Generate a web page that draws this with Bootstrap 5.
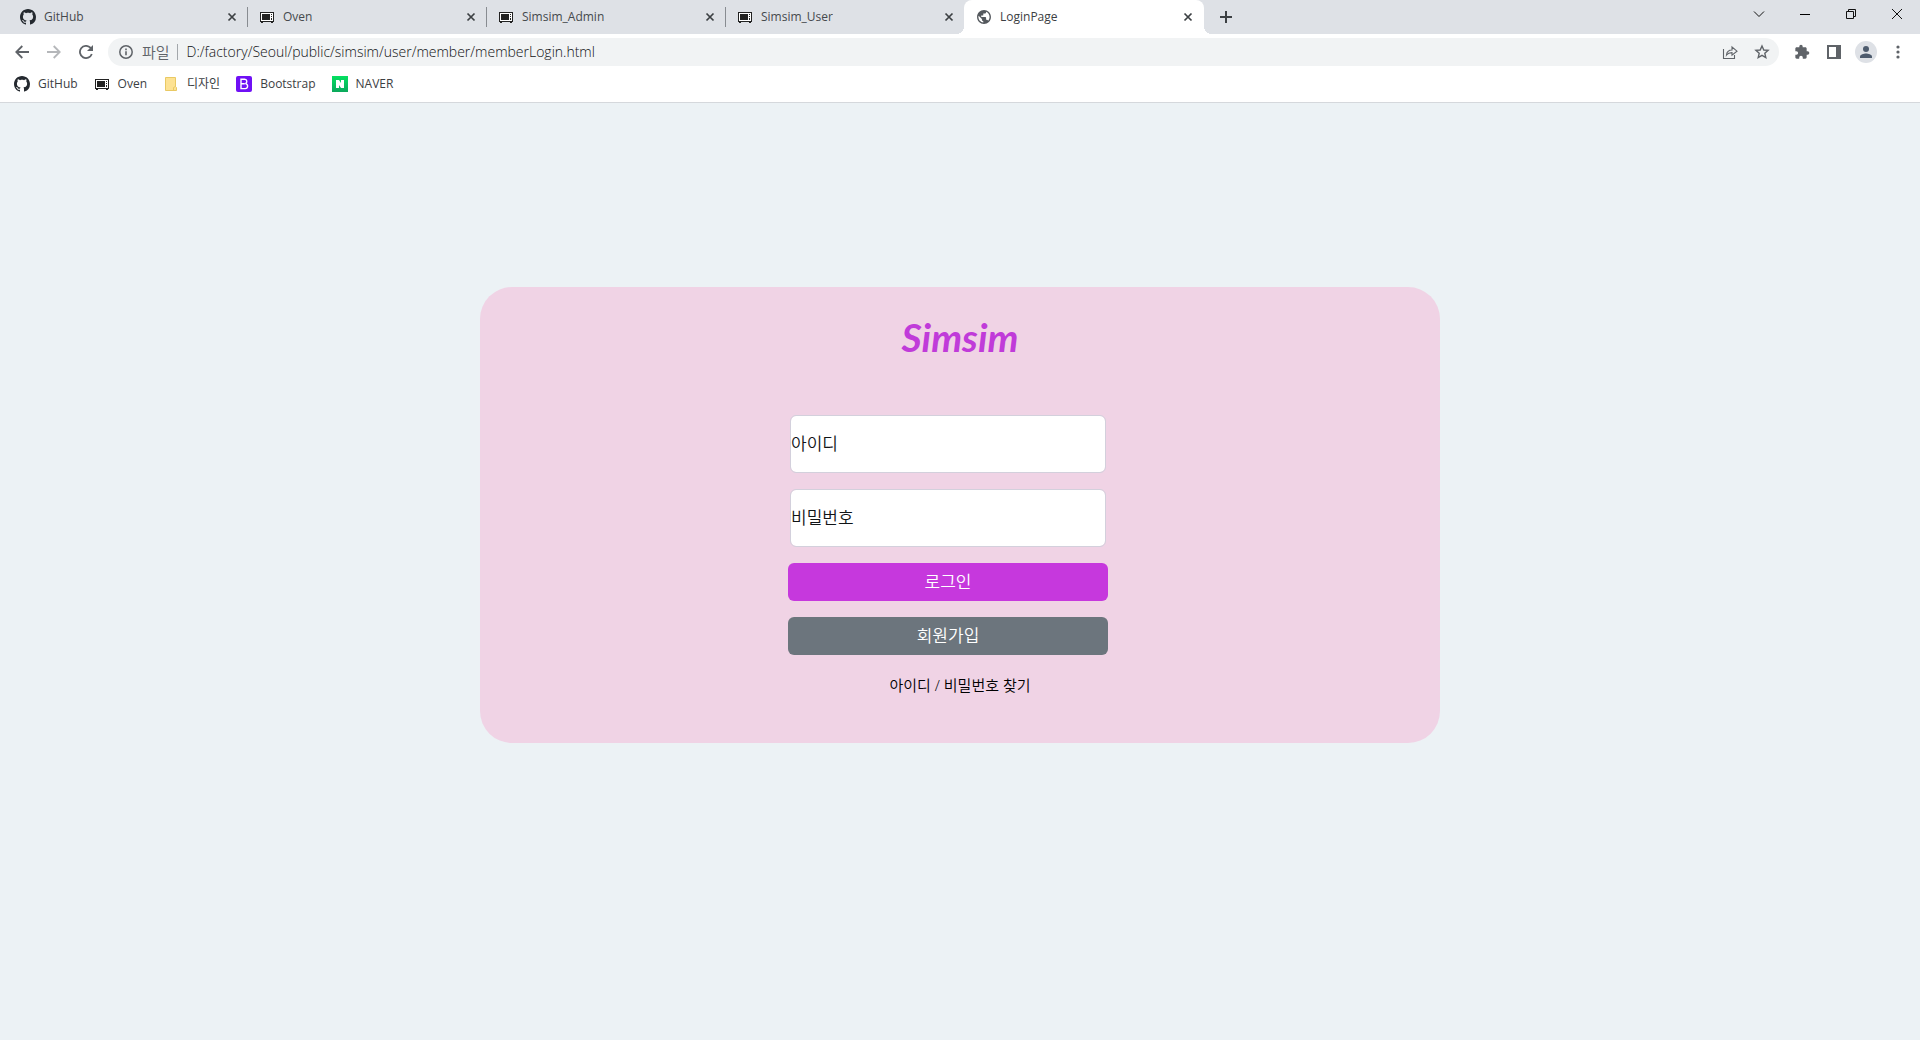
<!DOCTYPE html>
<html lang="ko">
<head>
<meta charset="utf-8">
<meta name="viewport" content="width=device-width, initial-scale=1">
<title>LoginPage</title>
<link href="https://cdn.jsdelivr.net/npm/bootstrap@5.3.0/dist/css/bootstrap.min.css" rel="stylesheet">
<style>
  body { font-family: "Open Sans", "Noto Sans CJK KR", sans-serif; background: #ecf2f5; color: #212529; }
  button { font-family: inherit; }
  svg { display: block; flex: none; }
  .ico { width: 16px; height: 16px; }

  /* tab strip */
  .tab-strip { background: #dee1e6; height: 34px; padding-left: 8px; }
  .tab-item { flex: 0 1 239px; min-width: 0; height: 20px; margin-top: 7px; padding: 0 7px 0 12px; position: relative; font-size: 12px; color: #45494d; }
  .tab-item > a { min-width: 0; color: inherit; }
  .tab-item.ruled { border-left: 1px solid #888c91; padding-left: 11px; }
  .tab-item.current { flex-basis: 240px; background: #fff; height: 34px; margin-top: 0; border-radius: 8px 8px 0 0; padding-right: 8px; color: #3c4043; }
  .tab-item.current::before, .tab-item.current::after { content: ""; position: absolute; bottom: 0; width: 8px; height: 8px; }
  .tab-item.current::before { right: 100%; background: radial-gradient(circle at 0 0, transparent 8px, #fff 8px); }
  .tab-item.current::after { left: 100%; background: radial-gradient(circle at 100% 0, transparent 8px, #fff 8px); }
  .plain { border: 0; background: none; padding: 0; display: flex; align-items: center; justify-content: center; color: #5f6368; }
  .tab-strip .plain { color: #3c4043; }
  .tab-close { width: 16px; height: 16px; }
  .tab-add { width: 28px; height: 34px; margin-left: 8px; }
  .win-btn { width: 46px; height: 28px; }
  .tab-strip .win-btn { color: #111; }

  /* toolbar */
  .tool-row { height: 36px; padding: 0 6px; background: #fff; }
  .tool-btn { width: 32px; height: 28px; }
  .address { background: #f1f3f4; height: 28px; border-radius: 14px; margin: 0 7px 0 6px; padding: 0 1px 0 10px; color: #5f6368; font-size: 14px; }
  .address label { font-size: 15px; font-weight: 350; line-height: 20px; }
  .address input { border: 0; background: none; outline: 0; min-width: 0; height: 20px; padding: 0 0 1px; color: #101113; font-size: 14px; font-weight: 300; }
  .address .rule { width: 1px; height: 16px; background: #a3a7ab; margin: 0 9px 0 7px; }
  .avatar { width: 22px; height: 22px; }

  /* bookmarks */
  .marks { height: 33px; padding: 0 14px 5px; gap: 16px; background: #fff; border-bottom: 1px solid #d5d8dc; font-size: 12px; }
  .marks a { color: #3c4043; gap: 8px; }

  /* login */
  .stage { padding: 184px 0 48px; }
  .login-box { width: 50%; min-width: 360px; background: #f0d3e5; border-radius: 32px; padding: 20px 0 46px; font-weight: 350; }
  .brand { font-family: Lato, sans-serif; font-style: italic; font-weight: 700; font-size: 39px; line-height: 60px; color: #c03bd9; margin-bottom: 48px; }
  .login-form { width: 320px; margin-right: 24px; gap: 16px; font-size: 17px; }
  .login-form .form-floating { margin: 0 2px; }
  .login-form .form-control { height: 58px; min-height: 0; padding: 0 1px; border-color: #d3d0dc; font-size: 17px; }
  .login-form .form-floating > label { padding: 0; height: 100%; display: flex; align-items: center; color: #111416; }
  .login-form .form-control:focus ~ label, .login-form .form-control:not(:placeholder-shown) ~ label { opacity: 0; }
  .login-form .form-control:placeholder-shown:not(:focus) ~ label { opacity: 1; }
  .login-form .btn { height: 38px; font-size: 17px; font-weight: 350; line-height: 24px; border: 0; }
  .btn-orchid, .btn-orchid:hover { background: #c638dd; color: #fff; }
  .find { font-size: 15px; line-height: 24px; color: #000; margin-top: 18px; }
</style>
<script src="https://cdn.jsdelivr.net/npm/bootstrap@5.3.0/dist/js/bootstrap.bundle.min.js"></script>
</head>
<body>

<svg width="0" height="0" class="position-absolute" aria-hidden="true">
  <symbol id="i-github" viewBox="0 0 16 16"><path fill="#24292f" d="M8 0C3.58 0 0 3.58 0 8c0 3.54 2.29 6.53 5.47 7.59.4.07.55-.17.55-.38 0-.19-.01-.82-.01-1.49-2.01.37-2.53-.49-2.69-.94-.09-.23-.48-.94-.82-1.13-.28-.15-.68-.52-.01-.53.63-.01 1.08.58 1.23.82.72 1.21 1.87.87 2.33.66.07-.52.28-.87.51-1.07-1.78-.2-3.64-.89-3.64-3.95 0-.87.31-1.59.82-2.15-.08-.2-.36-1.02.08-2.12 0 0 .67-.21 2.2.82.64-.18 1.32-.27 2-.27s1.36.09 2 .27c1.53-1.04 2.2-.82 2.2-.82.44 1.1.16 1.92.08 2.12.51.56.82 1.27.82 2.15 0 3.07-1.87 3.75-3.65 3.95.29.25.54.73.54 1.48 0 1.07-.01 1.93-.01 2.2 0 .21.15.46.55.38A8.01 8.01 0 0 0 16 8c0-4.42-3.58-8-8-8z"/></symbol>
  <symbol id="i-oven" viewBox="0 0 16 16"><path fill="#222" d="M1 3h14v10h-1v1h-2v-1H4v1H2v-1H1z"/><path fill="#fff" d="M2 4h12v8H2z"/><path fill="#222" d="M3 5h8v6H3zM12 5h1v1h-1zM12 7h1v1h-1zM12 9h1v2h-1z"/></symbol>
  <symbol id="i-x" viewBox="0 0 16 16"><path d="M4.500 4.500l7 7m0-7l-7 7" stroke="currentColor" stroke-width="1.700" fill="none"/></symbol>
</svg>

<header>
  <nav class="tab-strip d-flex" aria-label="Tabs">
    <div class="tab-item d-flex align-items-center">
      <a href="#" class="d-flex align-items-center gap-2 flex-grow-1 text-decoration-none"><svg class="ico"><use href="#i-github"/></svg><span class="text-truncate">GitHub</span></a>
      <button class="plain tab-close" aria-label="Close"><svg class="ico"><use href="#i-x"/></svg></button>
    </div>
    <div class="tab-item ruled d-flex align-items-center">
      <a href="#" class="d-flex align-items-center gap-2 flex-grow-1 text-decoration-none"><svg class="ico"><use href="#i-oven"/></svg><span class="text-truncate">Oven</span></a>
      <button class="plain tab-close" aria-label="Close"><svg class="ico"><use href="#i-x"/></svg></button>
    </div>
    <div class="tab-item ruled d-flex align-items-center">
      <a href="#" class="d-flex align-items-center gap-2 flex-grow-1 text-decoration-none"><svg class="ico"><use href="#i-oven"/></svg><span class="text-truncate">Simsim_Admin</span></a>
      <button class="plain tab-close" aria-label="Close"><svg class="ico"><use href="#i-x"/></svg></button>
    </div>
    <div class="tab-item ruled d-flex align-items-center">
      <a href="#" class="d-flex align-items-center gap-2 flex-grow-1 text-decoration-none"><svg class="ico"><use href="#i-oven"/></svg><span class="text-truncate">Simsim_User</span></a>
      <button class="plain tab-close" aria-label="Close"><svg class="ico"><use href="#i-x"/></svg></button>
    </div>
    <div class="tab-item current d-flex align-items-center">
      <a href="#" class="d-flex align-items-center gap-2 flex-grow-1 text-decoration-none" aria-current="page">
        <svg class="ico" viewBox="0.500 0.500 23 23"><path fill="#54585d" d="M12 2C6.480 2 2 6.480 2 12s4.480 10 10 10 10-4.480 10-10S17.520 2 12 2zm-1 17.930c-3.950-.49-7-3.850-7-7.930 0-.62.08-1.210.21-1.790L9 15v1c0 1.100.9 2 2 2v1.930zm6.900-2.540c-.26-.81-1-1.390-1.900-1.390h-1v-3c0-.55-.45-1-1-1H8v-2h2c.55 0 1-.45 1-1V7h2c1.100 0 2-.9 2-2v-.41c2.930 1.190 5 4.060 5 7.410 0 2.080-.8 3.970-2.100 5.390z"/></svg>
        <span class="text-truncate">LoginPage</span></a>
      <button class="plain tab-close" aria-label="Close"><svg class="ico"><use href="#i-x"/></svg></button>
    </div>
    <button class="plain tab-add" aria-label="New tab"><svg width="14" height="14" viewBox="0 0 14 14"><path d="M7 1v12M1 7h12" stroke="currentColor" stroke-width="2"/></svg></button>
    <div class="d-flex ms-auto">
      <button class="plain win-btn" aria-label="Search tabs"><svg width="12" height="12" viewBox="0 0 12 12"><path d="M1 3.500l5 5 5-5" stroke="currentColor" fill="none"/></svg></button>
      <button class="plain win-btn" aria-label="Minimize"><svg width="10" height="10" viewBox="0 0 10 10"><path d="M0 5h10v1H0z"/></svg></button>
      <button class="plain win-btn" aria-label="Restore"><svg width="10" height="10" viewBox="0 0 10 10"><path d="M.5 2.500h7v7h-7zM2.500 2.500v-2h7v7h-2" stroke="currentColor" fill="none"/></svg></button>
      <button class="plain win-btn" aria-label="Close window"><svg width="10" height="10" viewBox="0 0 10 10"><path d="M0 0l10 10M10 0L0 10" stroke="currentColor" fill="none"/></svg></button>
    </div>
  </nav>

  <div class="tool-row d-flex align-items-center">
    <button class="plain tool-btn" aria-label="Back"><svg width="14" height="14" viewBox="0 0 14 14"><path d="M14 7H1.500M7.300 1L1.300 7l6 6" stroke="currentColor" stroke-width="1.800" fill="none"/></svg></button>
    <button class="plain tool-btn" aria-label="Forward" disabled><svg width="14" height="14" viewBox="0 0 14 14"><path d="M0 7h12.500M6.700 1l6 6-6 6" stroke="#b5b7ba" stroke-width="1.800" fill="none"/></svg></button>
    <button class="plain tool-btn" aria-label="Reload"><svg width="14" height="14" viewBox="0 0 14 14"><path d="M12.800 9A6.100 6.100 0 1 1 11.400 2.700L12.500 4" stroke="currentColor" stroke-width="1.800" fill="none"/><path fill="currentColor" d="M14 0v6H8z"/></svg></button>
    <div class="address d-flex align-items-center flex-grow-1">
      <svg class="ico" viewBox="0 0 16 16"><circle cx="8" cy="8" r="6.200" stroke="currentColor" stroke-width="1.500" fill="none"/><path fill="currentColor" d="M7.200 7.200h1.600v4H7.200zM7.200 4.600h1.600v1.600H7.200z"/></svg>
      <label for="url" class="ms-2">파일</label>
      <span class="rule"></span>
      <input id="url" type="text" class="flex-grow-1" value="D:/factory/Seoul/public/simsim/user/member/memberLogin.html">
      <button class="plain tool-btn" aria-label="Share"><svg class="ico" viewBox="0 0 16 16"><path d="M1.500 5v9.500h11V11M4.500 11c.3-3.300 2.200-5 5.500-5V3l5 4.200-5 4V8.600c-2.600 0-4.300.8-5.500 2.400z" stroke="currentColor" stroke-width="1.100" fill="none"/></svg></button>
      <button class="plain tool-btn" aria-label="Bookmark"><svg class="ico" viewBox="0 0 16 16"><path d="M8 2l1.800 4 4.300.4-3.300 2.900 1 4.200L8 11.300l-3.800 2.200 1-4.200L1.900 6.400 6.200 6z" stroke="currentColor" stroke-width="1.400" fill="none"/></svg></button>
    </div>
    <button class="plain tool-btn" aria-label="Extensions"><svg class="ico" viewBox="0 0 24 24"><path fill="currentColor" d="M20.500 11H19V7c0-1.100-.9-2-2-2h-4V3.500a2.500 2.500 0 0 0-5 0V5H4c-1.100 0-2 .9-2 2v3.800h1.500a2.700 2.700 0 0 1 0 5.400H2V20c0 1.100.9 2 2 2h3.800v-1.500a2.700 2.700 0 0 1 5.400 0V22H17c1.100 0 2-.9 2-2v-4h1.500a2.500 2.500 0 0 0 0-5z"/></svg></button>
    <button class="plain tool-btn" aria-label="Side panel"><svg width="14" height="14" viewBox="0 0 14 14"><path fill="currentColor" fill-rule="evenodd" d="M0 0h14v14H0zM2 2v10h7V2z"/></svg></button>
    <button class="plain tool-btn" aria-label="Profile"><svg class="avatar" viewBox="0 0 22 22"><circle cx="11" cy="11" r="11" fill="#dee1e6"/><circle cx="11" cy="8" r="3" fill="#4d5b6d"/><path fill="#4d5b6d" d="M5 17v-1.500c0-2 4-3 6-3s6 1 6 3V17z"/></svg></button>
    <button class="plain tool-btn" aria-label="Menu"><svg width="4" height="14" viewBox="0 0 4 14"><g fill="currentColor"><circle cx="2" cy="2" r="1.600"/><circle cx="2" cy="7" r="1.600"/><circle cx="2" cy="12" r="1.600"/></g></svg></button>
  </div>

  <nav class="marks d-flex align-items-center" aria-label="Bookmarks">
    <a href="#" class="d-flex align-items-center text-decoration-none"><svg class="ico"><use href="#i-github"/></svg>GitHub</a>
    <a href="#" class="d-flex align-items-center text-decoration-none"><svg class="ico"><use href="#i-oven"/></svg>Oven</a>
    <a href="#" class="d-flex align-items-center text-decoration-none"><svg class="ico" viewBox="0 0 16 16"><path d="M2.500 1.500h10v9l1 1v3h-11z" fill="#fde293" stroke="#e9c964"/><path d="M10.500 14v-2.500l2-1" fill="none" stroke="#e9c964"/></svg>디자인</a>
    <a href="#" class="d-flex align-items-center text-decoration-none"><svg class="ico" viewBox="0 0 16 16"><rect width="16" height="16" rx="2" fill="#6f10f5"/><path d="M5 3.300h3.700a2.200 2.200 0 0 1 .6 4.300 2.500 2.500 0 0 1-.4 5H5zM5 7.800h3.800" fill="none" stroke="#fff" stroke-width="1.400"/></svg>Bootstrap</a>
    <a href="#" class="d-flex align-items-center text-decoration-none"><svg class="ico" viewBox="0 0 16 16"><linearGradient id="nv" x2="0" y2="1"><stop stop-color="#03e060"/><stop offset="1" stop-color="#0ba85c"/></linearGradient><path fill="url(#nv)" d="M0 0h16v16H0z"/><path fill="#fff" d="M4 4h3l2 3V4h3v8H9L7 9v3H4z"/></svg>NAVER</a>
  </nav>
</header>

<main class="stage d-flex justify-content-center">
  <section class="login-box d-flex flex-column align-items-center">
    <h1 class="brand">Simsim</h1>
    <form class="login-form d-flex flex-column">
      <div class="form-floating">
        <input class="form-control" type="text" id="uid" placeholder=" ">
        <label for="uid">아이디</label>
      </div>
      <div class="form-floating">
        <input class="form-control" type="password" id="upw" placeholder=" ">
        <label for="upw">비밀번호</label>
      </div>
      <button type="submit" class="btn btn-orchid">로그인</button>
      <button type="button" class="btn btn-secondary">회원가입</button>
    </form>
    <a href="#" class="find text-decoration-none">아이디 / 비밀번호 찾기</a>
  </section>
</main>
</body>
</html>
